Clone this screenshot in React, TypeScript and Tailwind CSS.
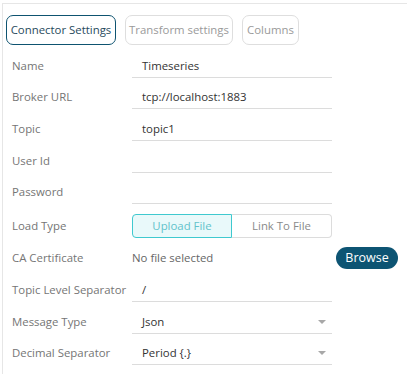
import { ReactNode } from "react";

function Field({ label, children, top, h = 24 }: { label: string; children: ReactNode; top: string; h?: number }) {
  return (
    <div className={`flex items-center ${top}`} style={{ height: h }}>
      <div className="w-[120px] shrink-0 whitespace-nowrap text-[#757575]">{label}</div>
      {children}
    </div>
  );
}

function TextInput({ value }: { value: string }) {
  return (
    <div className="flex h-full w-[200px] items-center border-b border-[#dcdcdc] pl-[10px] text-[#333]">
      {value}
    </div>
  );
}

function Select({ value }: { value: string }) {
  return (
    <div className="flex h-full w-[200px] items-center justify-between border-b border-[#dcdcdc] pl-[10px] pr-[6px] text-[#333]">
      <span>{value}</span>
      <svg width="8" height="4" viewBox="0 0 8 4">
        <path d="M0 0h8L4 4z" fill="#a8a8a8" />
      </svg>
    </div>
  );
}

export default function App() {
  return (
    <div className="h-[374px] w-[407px] overflow-hidden bg-white pl-[2px] pt-[3px] text-[11.4px]" style={{ fontFamily: "'Open Sans', sans-serif" }}>
      <div className="h-full border-l border-t border-[#e6e6e6] pl-[9px]">
        <div className="-ml-[6px] mt-[11px] flex gap-[9px]">
          <button className="h-[30px] w-[110px] rounded-[7px] border-[1.5px] border-[#0e5370] text-[#274a5c]">
            Connector Settings
          </button>
          <button className="h-[30px] w-[108px] rounded-[7px] border border-[#dedede] text-[#9a9a9a]">
            Transform settings
          </button>
          <button className="h-[30px] w-[57px] rounded-[7px] border border-[#dedede] text-[#9a9a9a]">
            Columns
          </button>
        </div>

        <Field label="Name" top="mt-[9px]">
          <TextInput value="Timeseries" />
        </Field>
        <Field label="Broker URL" top="mt-[7px]">
          <TextInput value="tcp://localhost:1883" />
        </Field>
        <Field label="Topic" top="mt-[8px]">
          <TextInput value="topic1" />
        </Field>
        <Field label="User Id" top="mt-[8px]">
          <TextInput value="" />
        </Field>
        <Field label="Password" top="mt-[7px]">
          <TextInput value="" />
        </Field>

        <Field label="Load Type" top="mt-[10px]">
          <div className="flex h-full w-[200px]">
            <div className="flex w-[100px] items-center justify-center rounded-l-[4px] border border-[#3fc9cf] bg-[#e9f9fa] text-[#62c3cb]">
              Upload File
            </div>
            <div className="flex flex-1 items-center justify-center rounded-r-[4px] border border-l-0 border-[#dcdcdc] text-[#8a8a8a]">
              Link To File
            </div>
          </div>
        </Field>

        <Field label="CA Certificate" top="mt-[9px]" h={22}>
          <div className="flex w-[204px] items-center text-[#666]">No file selected</div>
          <button className="h-[22px] w-[62px] rounded-full bg-[#0d5473] text-[12.5px] font-medium text-white">
            Browse
          </button>
        </Field>

        <Field label="Topic Level Separator" top="mt-[9px]">
          <TextInput value="/" />
        </Field>
        <Field label="Message Type" top="mt-[8px]">
          <Select value="Json" />
        </Field>
        <Field label="Decimal Separator" top="mt-[7px]">
          <Select value="Period {.}" />
        </Field>
      </div>
    </div>
  );
}
